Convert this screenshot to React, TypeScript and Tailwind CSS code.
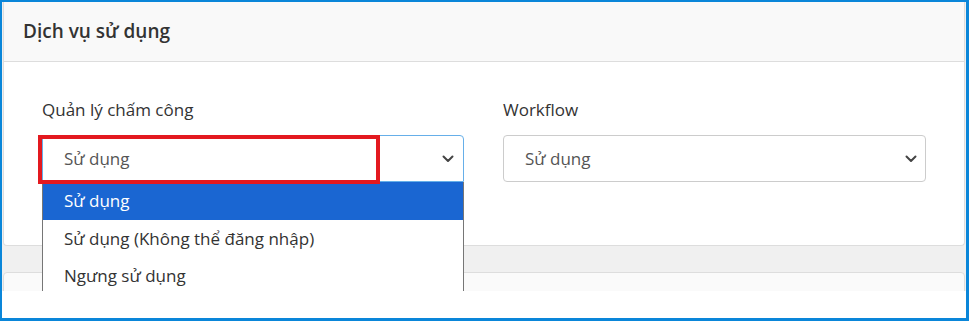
const FONT = { fontFamily: "'Open Sans', 'Liberation Sans', sans-serif" };

const OPTIONS = ["Sử dụng", "Sử dụng (Không thể đăng nhập)", "Ngưng sử dụng"];

function Chevron() {
  return (
    <svg width="12" height="8" viewBox="0 0 12 8" className="shrink-0">
      <path d="M1.5 1.5 6 6l4.5-4.5" fill="none" stroke="#444" strokeWidth="2" strokeLinecap="round" strokeLinejoin="round" />
    </svg>
  );
}

export default function App() {
  return (
    <div
      className="w-[969px] h-[321px] bg-white border-l-2 border-t-2 border-r-[3px] border-b-[3px] border-[#0a86d9] overflow-hidden"
      style={FONT}
    >
      <div className="h-[289px] bg-[#f0f0f0] px-px overflow-hidden">
        {/* Card: service settings */}
        <div className="bg-white border-x border-b border-[#dddddd] rounded-b">
          <div className="h-[60px] bg-[#f9f9f9] border-b border-[#dddddd] px-[19px] flex items-center">
            <h2 className="text-[19px] font-semibold text-[#333] pb-px">Dịch vụ sử dụng</h2>
          </div>

          <div className="h-[183px] pl-[38px] pr-[38px] pt-[36px] grid grid-cols-[422px_1fr] gap-x-[39px] items-start">
            {/* Timekeeping */}
            <div>
              <label className="block h-[24px] leading-[24px] text-[17px] text-[#333]">Quản lý chấm công</label>
              <div className="relative mt-[13px]">
                <div className="h-[47px] border border-[#66afe9] rounded-t flex items-center justify-between pl-[21px] pr-[9px] bg-white">
                  <span className="text-[17px] text-[#555]">Sử dụng</span>
                  <Chevron />
                </div>

                {/* Open options list */}
                <div className="absolute left-0 right-0 top-full bg-white border-x border-[#767676] z-10">
                  {OPTIONS.map((o, i) => (
                    <div
                      key={o}
                      className={
                        i === 0
                          ? "h-[38px] flex items-center pl-[21px] bg-[#1a66d2] text-white text-[17px]"
                          : "h-[37px] flex items-center pl-[21px] text-[#333] text-[17px]"
                      }
                    >
                      {o}
                    </div>
                  ))}
                </div>

                {/* Highlight box */}
                <div className="absolute -left-[4px] top-0 w-[342px] h-[49px] border-4 border-[#e3191f] pointer-events-none z-20" />
              </div>
            </div>

            {/* Workflow */}
            <div>
              <label className="block h-[24px] leading-[24px] text-[17px] text-[#333]">Workflow</label>
              <div className="mt-[13px] h-[47px] border border-[#cccccc] rounded flex items-center justify-between pl-[21px] pr-[8px] bg-white">
                <span className="text-[17px] text-[#555]">Sử dụng</span>
                <Chevron />
              </div>
            </div>
          </div>
        </div>

        {/* Next card (cut off) */}
        <div className="mt-[26px] h-[40px] bg-[#fafafa] border border-[#dddddd] rounded-t" />
      </div>
    </div>
  );
}
